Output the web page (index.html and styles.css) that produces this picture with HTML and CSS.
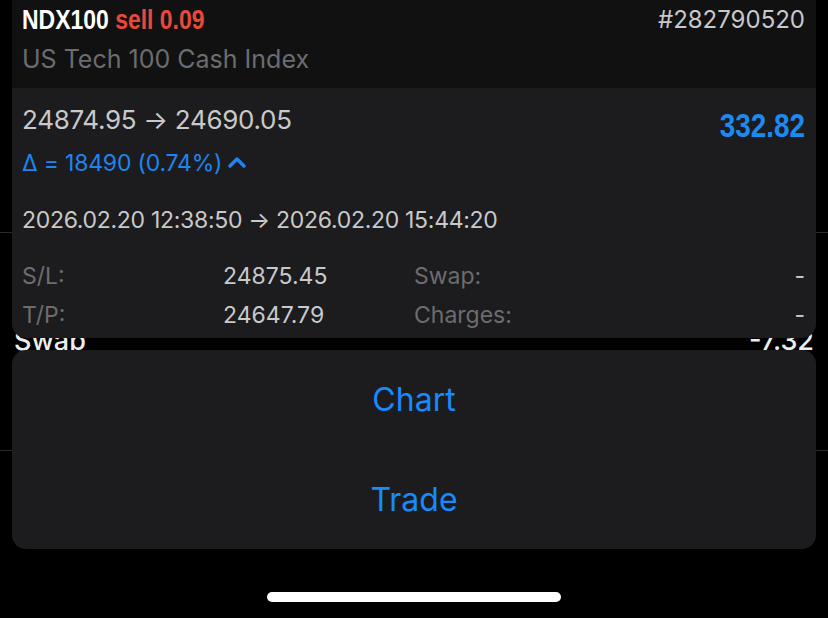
FILE: index.html
```html
<!DOCTYPE html>
<html lang="en">
<head>
  <meta charset="UTF-8" />
  <meta name="viewport" content="width=device-width, initial-scale=1.0"/>
  <title>Position details</title>
  <link rel="stylesheet" href="styles.css">
</head>
<body>

  <div class="screen">

    <!-- list behind the popup -->
    <div class="bg-list">
      <div class="bg-row bg-top"></div>
      <div class="bg-row bg-swap">
        <span>Swap</span>
        <span>-7.32</span>
      </div>
    </div>

    <div class="detail-card">
      <div class="card-head">
        <div class="head-line">
          <span class="symbol">NDX100 <span class="side">sell 0.09</span></span>
          <span class="ticket">#282790520</span>
        </div>
        <div class="desc">US Tech 100 Cash Index</div>
      </div>

      <div class="card-body">
        <div class="price-line">
          <span class="prices">24874.95 → 24690.05</span>
          <span class="profit">332.82</span>
        </div>
        <div class="delta">
          Δ = 18490 (0.74%)
          <svg class="chev" width="18" height="12" viewBox="0 0 18 12">
            <path d="M2 10 L9 3 L16 10" fill="none" stroke="#1f84ee" stroke-width="3.4" stroke-linecap="round" stroke-linejoin="round"/>
          </svg>
        </div>
        <div class="dates">2026.02.20 12:38:50 → 2026.02.20 15:44:20</div>

        <div class="stats">
          <span class="lbl">S/L:</span>
          <span class="val">24875.45</span>
          <span class="lbl">Swap:</span>
          <span class="val right">-</span>
          <span class="lbl">T/P:</span>
          <span class="val">24647.79</span>
          <span class="lbl">Charges:</span>
          <span class="val right">-</span>
        </div>
      </div>
    </div>

    <div class="action-sheet">
      <button class="action">Chart</button>
      <button class="action">Trade</button>
    </div>

    <div class="home-bar"></div>
  </div>

</body>
</html>
```

FILE: styles.css
```css
body {
  margin: 0;
  background-color: #000;
  font-family: 'Inter', 'Liberation Sans', sans-serif;
  color: #c9c9cb;
}
.screen {
  position: relative;
  width: 828px;
  height: 618px;
  overflow: hidden;
}
.bg-row {
  border-bottom: 1px solid #2a2a2c;
}
.bg-top {
  height: 232px;
}
.bg-swap {
  height: 218px;
  box-sizing: border-box;
  padding: 102px 14px 0 14px;
  display: flex;
  justify-content: space-between;
  align-items: flex-start;
  font-size: 27px;
  line-height: 12px;
  font-weight: 500;
  color: #ededed;
}
.detail-card {
  position: absolute;
  top: -14px;
  left: 12px;
  width: 804px;
  border-radius: 14px;
  overflow: hidden;
  background: #1c1c1e;
}
.card-head {
  background: #111;
  padding: 16px 11px 11px 10px;
}
.head-line {
  display: flex;
  justify-content: space-between;
  line-height: 36px;
}
/* narrow bold face, like Arial Narrow */
.symbol {
  display: inline-block;
  font-family: 'Liberation Sans', sans-serif;
  font-weight: bold;
  font-size: 28px;
  color: #fff;
  transform: scaleX(0.82);
  transform-origin: left center;
  white-space: nowrap;
}
.side {
  color: #e8493b;
}
.ticket {
  font-size: 24px;
  color: #c8c8ca;
}
.desc {
  margin-top: 3px;
  font-size: 25px;
  line-height: 36px;
  color: #6c6c70;
}
.card-body {
  padding: 14px 11px 3px 10px;
}
.price-line {
  display: flex;
  justify-content: space-between;
  align-items: flex-start;
  line-height: 36px;
}
.prices {
  font-size: 26px;
  letter-spacing: -0.3px;
}
.profit {
  display: inline-block;
  margin-top: 5px;
  font-family: 'Liberation Sans', sans-serif;
  font-weight: bold;
  font-size: 34px;
  color: #1b8bf2;
  transform: scaleX(0.82);
  transform-origin: right center;
}
.delta {
  margin-top: 4px;
  font-size: 23px;
  letter-spacing: -0.2px;
  line-height: 32px;
  color: #1f84ee;
  display: flex;
  align-items: center;
  gap: 6px;
}
.chev {
  margin-top: -2px;
}
.dates {
  margin-top: 25px;
  font-size: 23px;
  letter-spacing: -0.3px;
  line-height: 32px;
}
.stats {
  margin-top: 21px;
  display: grid;
  grid-template-columns: 201px 191px 1fr auto;
  font-size: 23px;
  line-height: 39px;
}
.lbl {
  color: #6c6c70;
}
.right {
  text-align: right;
}
.action-sheet {
  position: absolute;
  top: 350px;
  left: 12px;
  width: 804px;
  height: 199px;
  border-radius: 14px;
  background: #1c1c1e;
  display: flex;
  flex-direction: column;
}
.action {
  flex: 1;
  border: none;
  background: none;
  color: #168aff;
  font-family: 'Inter', 'Liberation Sans', sans-serif;
  font-size: 32px;
  padding: 0;
}
.home-bar {
  position: absolute;
  left: 267px;
  top: 592px;
  width: 294px;
  height: 10px;
  border-radius: 5px;
  background: #fff;
}
```
